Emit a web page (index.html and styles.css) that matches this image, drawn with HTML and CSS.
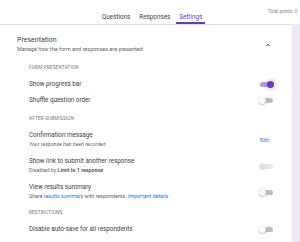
FILE: index.html
```html
<!DOCTYPE html>
<html lang="en">
<head>
    <meta charset="UTF-8">
    <title>Settings</title>
    <link rel="stylesheet" href="styles.css">
</head>
<body>
    <div class="topbar">
        <div class="tabs">
            <div class="tab">Questions</div>
            <div class="tab">Responses</div>
            <div class="tab active">Settings</div>
        </div>
        <div class="points">Total points: 0</div>
    </div>

    <div class="page">
        <div class="card">
            <div class="section-head">
                <div>
                    <div class="section-title">Presentation</div>
                    <div class="section-sub">Manage how the form and responses are presented</div>
                </div>
                <svg class="chevron" width="8" height="8" viewBox="0 0 24 24"><path d="M7.4 15.4 12 10.8l4.6 4.6L18 14l-6-6-6 6z" fill="#202124"/></svg>
            </div>

            <div class="group-label first">FORM PRESENTATION</div>
            <div class="row">
                <div class="row-title">Show progress bar</div>
                <div class="toggle on"><span class="thumb"></span></div>
            </div>
            <div class="row">
                <div class="row-title">Shuffle question order</div>
                <div class="toggle"><span class="thumb"></span></div>
            </div>

            <div class="group-label">AFTER SUBMISSION</div>
            <div class="row tall">
                <div>
                    <div class="row-title">Confirmation message</div>
                    <div class="row-sub"><i>Your response has been recorded</i></div>
                </div>
                <a class="edit">Edit</a>
            </div>
            <div class="row tall">
                <div>
                    <div class="row-title">Show link to submit another response</div>
                    <div class="row-sub">Disabled by <b>Limit to 1 response</b></div>
                </div>
                <div class="toggle disabled"><span class="thumb"></span></div>
            </div>
            <div class="row tall">
                <div>
                    <div class="row-title">View results summary</div>
                    <div class="row-sub">Share <a>results summary</a> with respondents. <a>Important details</a></div>
                </div>
                <div class="toggle"><span class="thumb"></span></div>
            </div>

            <div class="group-label restrict">RESTRICTIONS:</div>
            <div class="row">
                <div class="row-title">Disable auto-save for all respondents</div>
                <div class="toggle"><span class="thumb"></span></div>
            </div>
        </div>
        <div class="strip"></div>
    </div>
</body>
</html>
```

FILE: styles.css
```css
body {
    margin: 0;
    width: 300px;
    height: 242px;
    overflow: hidden;
    font-family: Roboto, "Noto Sans", sans-serif;
    color: #202124;
    background-color: #fff;
}

.topbar {
    display: flex;
    align-items: flex-end;
    height: 24px;
    background-color: #fff;
}

.tabs {
    display: flex;
    margin-left: 102px;
    gap: 9px;
}

.tab {
    font-size: 6.3px;
    line-height: 8px;
    padding-bottom: 3px;
    color: #3c4043;
}

    .tab.active {
        color: #673ab7;
        border-bottom: 2px solid #673ab7;
        padding: 0 3px 1px;
        margin-left: -3px;
    }

.points {
    margin-left: auto;
    margin-right: 3px;
    font-size: 4.6px;
    color: #80868b;
    padding-bottom: 4px;
    align-self: center;
    padding-top: 3px;
}

.page {
    display: flex;
    height: 218px;
    background-color: #ede7f6;
}

.card {
    width: 292px;
    background-color: #fff;
    border-top: 1px solid #e0e0e0;
    box-sizing: border-box;
    padding-left: 17px;
}

.strip {
    flex: 1;
}

.section-head {
    display: flex;
    align-items: center;
    padding-top: 11px;
    padding-right: 20px;
}

.section-title {
    font-size: 7px;
    line-height: 9px;
    color: #3c4043;
}

.section-sub {
    font-size: 5.5px;
    line-height: 8px;
    color: #5f6368;
}

.chevron {
    margin-left: auto;
    margin-top: 1px;
}

.group-label {
    font-size: 4.7px;
    line-height: 8px;
    letter-spacing: 0.15px;
    color: #70757a;
    padding-left: 12px;
    margin-top: 7px;
    margin-bottom: 4px;
}

    .group-label.first {
        margin-top: 11px;
    }

    .group-label.restrict {
        margin-top: 4px;
    }

.row {
    display: flex;
    align-items: center;
    height: 16px;
    padding-left: 12px;
    padding-right: 19px;
}

    .row.tall {
        height: 26px;
    }

.row-title {
    font-size: 6.3px;
    line-height: 9px;
    color: #3c4043;
}

.row-sub {
    font-size: 5.3px;
    line-height: 9px;
    color: #5f6368;
}

    .row-sub a {
        color: #1a73e8;
    }

    .row-sub b {
        font-weight: 500;
        color: #3c4043;
    }

.edit {
    margin-left: auto;
    margin-right: 4px;
    font-size: 5.3px;
    color: #1a73e8;
}

.toggle {
    position: relative;
    margin-left: auto;
    width: 13px;
    height: 5px;
    border-radius: 3px;
    background-color: #bdbdbd;
}

    .toggle .thumb {
        position: absolute;
        left: -1px;
        top: -1px;
        width: 7px;
        height: 7px;
        border-radius: 50%;
        background-color: #fafafa;
        box-shadow: 0 0.5px 1.5px rgba(0, 0, 0, 0.4);
    }

    .toggle.on {
        background-color: #b39ddb;
    }

        .toggle.on .thumb {
            left: auto;
            right: -1px;
            background-color: #673ab7;
            box-shadow: 0 0 0 3px rgba(103, 58, 183, 0.1);
        }

    .toggle.disabled {
        background-color: #e8e8e8;
    }

        .toggle.disabled .thumb {
            background-color: #e0e0e0;
            box-shadow: none;
        }
```
